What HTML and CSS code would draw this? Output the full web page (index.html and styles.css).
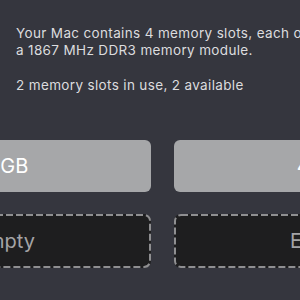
FILE: index.html
```html
<!DOCTYPE html>
<html>
<head>
    <meta charset="UTF-8" />
    <title>Memory</title>
    <link rel="stylesheet" href="styles.css">
</head>
<body>
    <div class="memory">
        <div class="info">
            <p>Your Mac contains 4 memory slots, each of which accepts<br>a 1867 MHz DDR3 memory module.</p>
            <p>2 memory slots in use, 2 available</p>
        </div>

        <div class="slots">
            <div class="slot filled">4 GB</div>
            <div class="slot filled">4 GB</div>
            <div class="slot empty">
                <svg class="dash"><rect x="1" y="1" rx="6" ry="6"></rect></svg>
                <span>Empty</span>
            </div>
            <div class="slot empty">
                <svg class="dash"><rect x="1" y="1" rx="6" ry="6"></rect></svg>
                <span>Empty</span>
            </div>
        </div>
    </div>
</body>
</html>
```

FILE: styles.css
```css
:root {
    --background: #35363e;
    --text: #dcdcde;
    --slot-filled: #a6a7a9;
    --slot-empty: #1e1e1f;
    --dash: #8f8f91;
}

body {
    margin: 0;
    background: var(--background);
    font-family: 'Inter', 'Noto Sans', sans-serif;
    overflow: hidden;
}

.memory {
    width: 300px;
    height: 300px;
    padding-top: 25px;
    box-sizing: border-box;
}

.info {
    padding-left: 16px;
    color: var(--text);
    font-size: 13.5px;
    letter-spacing: 0.35px;
    line-height: 17px;
    white-space: nowrap;
}

.info p {
    margin: 0 0 18px 0;
}

.slots {
    display: grid;
    grid-template-columns: repeat(2, 292px);
    grid-auto-rows: 52px 54px;
    gap: 22px 23px;
    margin-left: -141px;
    margin-top: 46px;
}

.slot {
    display: flex;
    align-items: center;
    justify-content: center;
    font-size: 20px;
    border-radius: 6px;
    white-space: nowrap;
    position: relative;
}

.filled {
    background: var(--slot-filled);
    color: #ffffff;
}

.empty {
    background: var(--slot-empty);
    color: #a4a4a6;
    border-radius: 7px;
}

.dash {
    position: absolute;
    top: 0;
    left: 0;
    width: 100%;
    height: 100%;
}

.dash rect {
    width: calc(100% - 2px);
    height: calc(100% - 2px);
    fill: none;
    stroke: var(--dash);
    stroke-width: 2;
    stroke-dasharray: 7 3;
}
```
